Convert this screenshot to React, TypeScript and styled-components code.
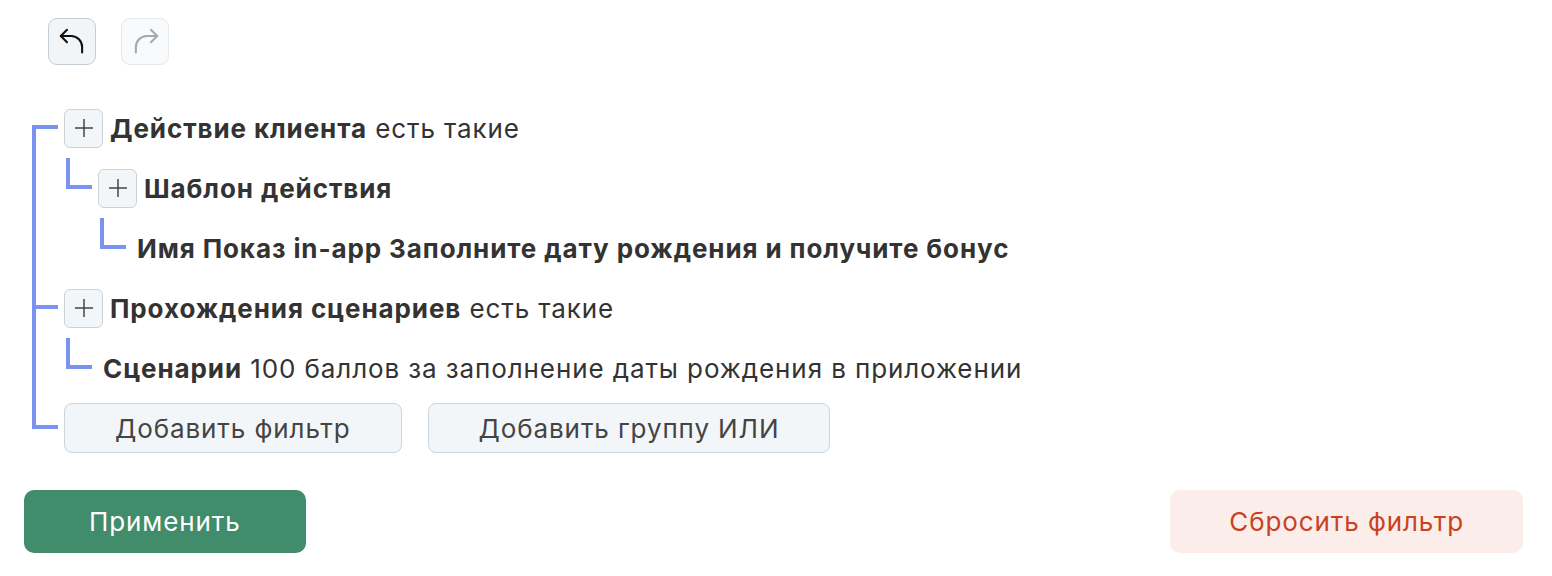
import React from 'react';
import styled, { createGlobalStyle } from 'styled-components';

const LINE = '#7b93f0';

const GlobalStyle = createGlobalStyle`
  html, body {
    margin: 0;
    padding: 0;
    background: #ffffff;
    font-family: Inter, "Noto Sans", "Liberation Sans", sans-serif;
    color: #333333;
  }
`;

const Page = styled.div`
  width: 1552px;
  height: 576px;
  box-sizing: border-box;
  padding: 18px 29px 0 24px;
`;

const HistoryBar = styled.div`
  display: flex;
  gap: 25px;
  padding-left: 24px;
`;

const HistoryButton = styled.button<{ $disabled?: boolean }>`
  width: 48px;
  height: 47px;
  box-sizing: border-box;
  display: flex;
  align-items: center;
  justify-content: center;
  padding: 0;
  border-radius: 9px;
  border: 1.5px solid ${p => (p.$disabled ? '#e3e8ec' : '#c3ced6')};
  background: ${p => (p.$disabled ? '#f8fafb' : '#f2f5f7')};
  color: ${p => (p.$disabled ? '#a4a9ad' : '#111111')};
  cursor: ${p => (p.$disabled ? 'default' : 'pointer')};
`;

const Tree = styled.div`
  position: relative;
  margin: 33px 0 0 8px;
  padding-left: 32px;

  &::before {
    content: '';
    position: absolute;
    left: 0;
    top: 27px;
    bottom: 29px;
    width: 4px;
    background: ${LINE};
  }
`;

const RootItem = styled.div`
  position: relative;

  &::before {
    content: '';
    position: absolute;
    left: -32px;
    top: 27px;
    width: 26px;
    height: 4px;
    background: ${LINE};
  }
`;

const ChildItem = styled.div`
  position: relative;
  padding-left: 34px;

  &::before {
    content: '';
    position: absolute;
    left: 2px;
    top: 0;
    width: 26px;
    height: 31px;
    box-sizing: border-box;
    border-left: 4px solid ${LINE};
    border-bottom: 4px solid ${LINE};
  }
`;

const Row = styled.div`
  height: 60px;
  display: flex;
  align-items: center;
  gap: 7px;
  font-size: 26px;
  letter-spacing: 0.9px;
  white-space: nowrap;
`;

const LeafText = styled.span`
  margin-left: 5px;
`;

const Strong = styled.b`
  font-weight: 700;
  color: #333333;
`;

const ExpandButton = styled.button`
  width: 39px;
  height: 39px;
  box-sizing: border-box;
  padding: 0;
  display: flex;
  align-items: center;
  justify-content: center;
  border: 1.5px solid #c9d3da;
  border-radius: 6px;
  background: #f3f6f8;
  color: #444444;
  cursor: pointer;
`;

const ActionsRow = styled.div`
  height: 60px;
  display: flex;
  align-items: center;
  gap: 26px;
`;

const OutlineButton = styled.button`
  height: 50px;
  box-sizing: border-box;
  padding: 0 50px;
  border: 1.5px solid #cbd5dd;
  border-radius: 8px;
  background: #f3f6f8;
  color: #444444;
  font-family: inherit;
  font-size: 26px;
  letter-spacing: 0.9px;
  cursor: pointer;
`;

const Footer = styled.div`
  margin-top: 32px;
  display: flex;
  justify-content: space-between;
`;

const FooterButton = styled.button<{ $variant: 'primary' | 'danger' }>`
  height: 63px;
  box-sizing: border-box;
  padding: 0 ${p => (p.$variant === 'primary' ? '65px' : '59px')};
  border: none;
  border-radius: 10px;
  font-family: inherit;
  font-size: 26px;
  letter-spacing: 0.9px;
  background: ${p => (p.$variant === 'primary' ? '#418c6b' : '#fbeeea')};
  color: ${p => (p.$variant === 'primary' ? '#ffffff' : '#c9421f')};
  cursor: pointer;
`;

const UndoIcon = ({ flip }: { flip?: boolean }) => (
  <svg
    width="33"
    height="33"
    viewBox="0 0 24 24"
    fill="none"
    stroke="currentColor"
    strokeWidth="1.5"
    strokeLinecap="round"
    strokeLinejoin="round"
    style={flip ? { transform: 'scaleX(-1)' } : undefined}
  >
    <path d="M8 3.5 3.5 8 8 12.5" />
    <path d="M3.5 8H11a8 8 0 0 1 8 8v4" />
  </svg>
);

const PlusIcon = () => (
  <svg width="20" height="20" viewBox="0 0 20 20" stroke="currentColor" strokeWidth="1.5">
    <line x1="10" y1="1" x2="10" y2="19" />
    <line x1="1" y1="10" x2="19" y2="10" />
  </svg>
);

const App: React.FC = () => (
  <>
    <GlobalStyle />
    <Page>
      <HistoryBar>
        <HistoryButton type="button">
          <UndoIcon />
        </HistoryButton>
        <HistoryButton type="button" $disabled>
          <UndoIcon flip />
        </HistoryButton>
      </HistoryBar>

      <Tree>
        <RootItem>
          <Row>
            <ExpandButton type="button"><PlusIcon /></ExpandButton>
            <span><Strong>Действие клиента</Strong> есть такие</span>
          </Row>
          <ChildItem>
            <Row>
              <ExpandButton type="button"><PlusIcon /></ExpandButton>
              <span><Strong>Шаблон действия</Strong></span>
            </Row>
            <ChildItem>
              <Row>
                <LeafText><Strong>Имя Показ in-app Заполните дату рождения и получите бонус</Strong></LeafText>
              </Row>
            </ChildItem>
          </ChildItem>
        </RootItem>

        <RootItem>
          <Row>
            <ExpandButton type="button"><PlusIcon /></ExpandButton>
            <span><Strong>Прохождения сценариев</Strong> есть такие</span>
          </Row>
          <ChildItem>
            <Row>
              <LeafText><Strong>Сценарии</Strong> 100 баллов за заполнение даты рождения в приложении</LeafText>
            </Row>
          </ChildItem>
        </RootItem>

        <RootItem>
          <ActionsRow>
            <OutlineButton type="button">Добавить фильтр</OutlineButton>
            <OutlineButton type="button">Добавить группу ИЛИ</OutlineButton>
          </ActionsRow>
        </RootItem>
      </Tree>

      <Footer>
        <FooterButton type="button" $variant="primary">Применить</FooterButton>
        <FooterButton type="button" $variant="danger">Сбросить фильтр</FooterButton>
      </Footer>
    </Page>
  </>
);

export default App;
